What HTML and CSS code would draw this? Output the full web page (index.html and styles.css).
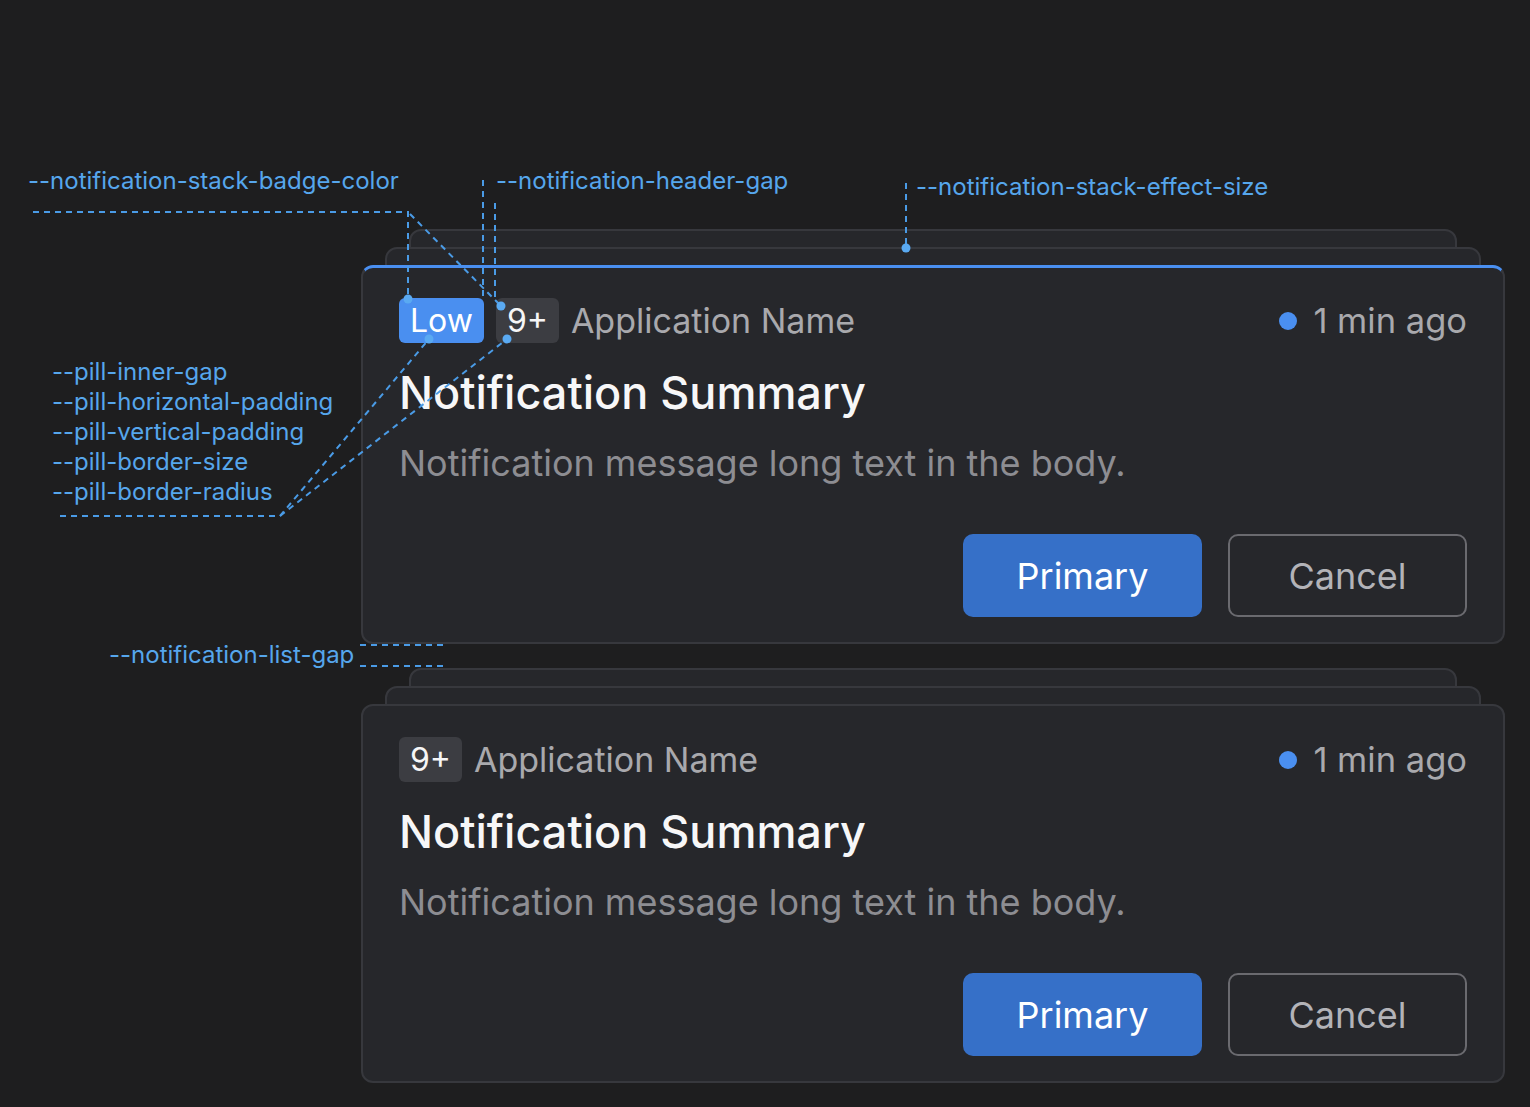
FILE: index.html
```html
<!DOCTYPE html>
<html lang="en">
<head>
    <meta charset="UTF-8">
    <meta name="viewport" content="width=device-width, initial-scale=1.0">
    <title>Notification Stack - Tokens</title>
    <link rel="stylesheet" href="styles.css">
</head>
<body>
    <div class="canvas">
        <main class="notification-list">
            <div class="notification-stack">
                <article class="notification notification--active">
                    <header class="notification-header">
                        <span class="pill pill-low">Low</span>
                        <span class="pill pill-count">9+</span>
                        <span class="app-name">Application Name</span>
                        <span class="timestamp"><span class="unread-dot"></span>1 min ago</span>
                    </header>
                    <h2 class="notification-title">Notification Summary</h2>
                    <p class="notification-body">Notification message long text in the body.</p>
                    <div class="notification-actions">
                        <button class="btn btn-primary">Primary</button>
                        <button class="btn btn-cancel">Cancel</button>
                    </div>
                </article>
            </div>

            <div class="notification-stack">
                <article class="notification">
                    <header class="notification-header">
                        <span class="pill pill-count">9+</span>
                        <span class="app-name">Application Name</span>
                        <span class="timestamp"><span class="unread-dot"></span>1 min ago</span>
                    </header>
                    <h2 class="notification-title">Notification Summary</h2>
                    <p class="notification-body">Notification message long text in the body.</p>
                    <div class="notification-actions">
                        <button class="btn btn-primary">Primary</button>
                        <button class="btn btn-cancel">Cancel</button>
                    </div>
                </article>
            </div>
        </main>

        <!-- token callouts drawn over the component -->
        <div class="annotations">
            <svg class="annotation-lines" width="1530" height="1107" viewBox="0 0 1530 1107">
                <g class="dash">
                    <path d="M33 212 H408 V299"/>
                    <path d="M410 214 L501 306"/>
                    <path d="M483 180 V300"/>
                    <path d="M495 203 V298"/>
                    <path d="M906 183 V248"/>
                    <path d="M60 516 H280 L429 339"/>
                    <path d="M280 516 L507 339"/>
                    <path d="M360 645 H443"/>
                    <path d="M360 666 H443"/>
                </g>
                <g class="dot">
                    <circle cx="408" cy="299" r="4.5"/>
                    <circle cx="429" cy="339" r="4.5"/>
                    <circle cx="501" cy="306" r="4.5"/>
                    <circle cx="507" cy="339" r="4.5"/>
                    <circle cx="906" cy="248" r="4.5"/>
                </g>
            </svg>

            <div class="annot-label label-badge-color">--notification-stack-badge-color</div>
            <div class="annot-label label-header-gap">--notification-header-gap</div>
            <div class="annot-label label-effect-size">--notification-stack-effect-size</div>
            <div class="annot-label label-pill">
                --pill-inner-gap<br>
                --pill-horizontal-padding<br>
                --pill-vertical-padding<br>
                --pill-border-size<br>
                --pill-border-radius
            </div>
            <div class="annot-label label-list-gap">--notification-list-gap</div>
        </div>
    </div>
</body>
</html>
```

FILE: styles.css
```css
body {
    font-family: Inter, 'Noto Sans', sans-serif;
    margin: 0;
    padding: 0;
    background: #1e1e1f;
    color: #f4f4f5;
}

.canvas {
    position: relative;
    width: 1530px;
    height: 1107px;
    overflow: hidden;
}

.notification-list {
    display: flex;
    flex-direction: column;
    gap: 24px;
    width: 1144px;
    margin-left: 361px;
    padding-top: 229px;
}

/* stacked cards peeking out behind the front one */
.notification-stack {
    position: relative;
    padding-top: 36px;
}

.notification-stack::before,
.notification-stack::after {
    content: '';
    position: absolute;
    height: 80px;
    background: #26272b;
    border: 2px solid #37383d;
    border-radius: 12px;
    box-sizing: border-box;
}

.notification-stack::before {
    top: 0;
    left: 48px;
    right: 48px;
}

.notification-stack::after {
    top: 18px;
    left: 24px;
    right: 24px;
}

.notification {
    position: relative;
    z-index: 1;
    background: #26272b;
    border: 2px solid #37383d;
    border-radius: 12px;
    padding: 31px 36px 25px;
}

.notification--active {
    border-top: 3px solid #4a8ff0;
    padding-top: 30px;
}

.notification-header {
    display: flex;
    align-items: center;
    gap: 12px;
    height: 45px;
}

.pill {
    font-size: 32px;
    line-height: 39px;
    padding: 3px 11px;
    border-radius: 6px;
    color: #f6f6f7;
}

.pill-low {
    background: #4a8ff0;
    color: #ffffff;
}

.pill-count {
    background: #3c3d42;
}

.app-name {
    font-size: 34px;
    color: #a9a9ad;
}

.timestamp {
    margin-left: auto;
    display: flex;
    align-items: center;
    gap: 16px;
    font-size: 34.5px;
    color: #a9a9ad;
}

.unread-dot {
    width: 18px;
    height: 18px;
    border-radius: 50%;
    background: #4a8ff0;
}

.notification-title {
    margin: 23px 0 0;
    font-size: 45px;
    line-height: 54px;
    font-weight: 500;
    color: #f7f7f8;
}

.notification-body {
    margin: 21px 0 0;
    font-size: 36px;
    line-height: 44px;
    color: #8d8d92;
}

.notification-actions {
    display: flex;
    justify-content: flex-end;
    gap: 26px;
    margin-top: 49px;
}

.btn {
    width: 239px;
    height: 83px;
    border-radius: 10px;
    font-family: inherit;
    font-size: 36px;
    cursor: pointer;
}

.btn-primary {
    background: #3670c8;
    border: none;
    color: #ffffff;
}

.btn-cancel {
    background: transparent;
    border: 2px solid #6a6a6f;
    color: #b3b3b8;
}

/* annotations */
.annotations {
    position: absolute;
    z-index: 2;
    top: 0;
    left: 0;
    width: 1530px;
    height: 1107px;
    pointer-events: none;
}

.annotation-lines {
    position: absolute;
    top: 0;
    left: 0;
}

.annotation-lines .dash path {
    fill: none;
    stroke: #4a9be6;
    stroke-width: 2;
    stroke-dasharray: 6 5;
}

.annotation-lines .dot circle {
    fill: #5aaaf2;
}

.annot-label {
    position: absolute;
    font-size: 24px;
    line-height: 30px;
    color: #56a6ec;
    white-space: nowrap;
}

.label-badge-color {
    left: 28px;
    top: 166px;
}

.label-header-gap {
    left: 496px;
    top: 166px;
}

.label-effect-size {
    left: 916px;
    top: 172px;
}

.label-pill {
    left: 52px;
    top: 357px;
}

.label-list-gap {
    left: 109px;
    top: 640px;
}
```
